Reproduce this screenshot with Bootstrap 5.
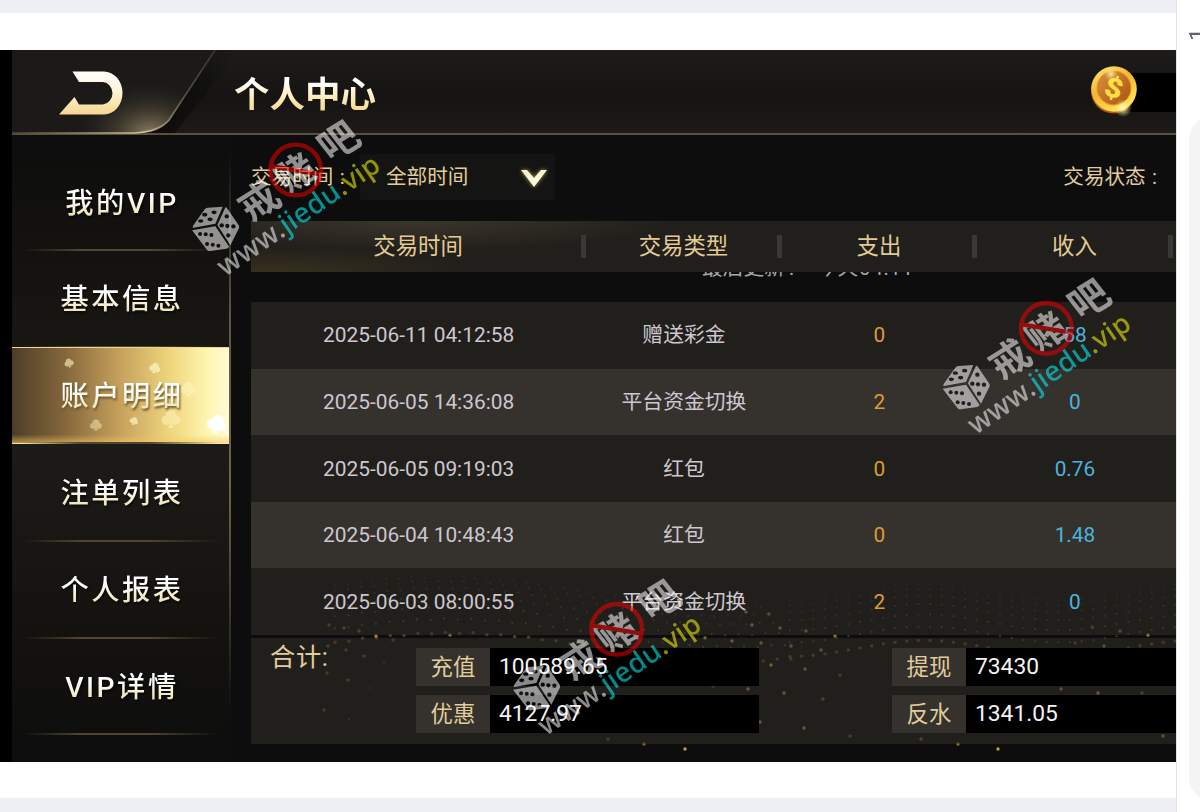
<!DOCTYPE html>
<html lang="zh-CN">
<head>
<meta charset="utf-8">
<title>个人中心</title>
<meta name="viewport" content="width=device-width, initial-scale=1">
<link href="https://cdn.jsdelivr.net/npm/bootstrap@5.3.0/dist/css/bootstrap.min.css" rel="stylesheet">
<style>
body{width:1200px;height:812px;overflow:hidden;background:#fff;font-family:Roboto,"Noto Sans CJK SC",sans-serif;line-height:1}
.viewer{width:1177px;border-right:1px solid #e3e3e5}
.strip{background:#eff0f5}
.shot{height:712px;background:#0d0d0d;border-left:12px solid #000;overflow:hidden;width:1176px}
.topbar{height:85px;background:linear-gradient(#1d1c1b,#151413 55%,#1c1a17);border-bottom:2px solid #5b4f3d}
.topbar .frame{left:0;top:0}
.title{font-weight:700;font-size:35.500px;left:222px;top:26px;line-height:38px;background:linear-gradient(#fff 15%,#fbe9b6 60%,#f3d589);-webkit-background-clip:text;color:transparent;letter-spacing:0}
.coin{right:37px;top:14px}
.balance{right:0;top:23px;width:64px;height:39px;background:#000}
.side{width:219px;height:627px;background:linear-gradient(#0d0d0d,#13120f 18%,#1c1b18 50%,#13120f 80%,#0d0d0d)}
.side::after{content:"";position:absolute;right:0;top:15px;width:2px;height:560px;background:linear-gradient(transparent,#5f5743 30%,#6e6549 60%,transparent)}
.menu-item{height:96.9px;font-size:28.3px;font-weight:500;letter-spacing:2.5px;width:217px;padding-top:4px;padding-left:3px}
.menu-item:first-child{height:115px;padding-top:23px}
.menu-item::after{content:"";position:absolute;left:10px;right:10px;bottom:-1px;height:2px;background:linear-gradient(90deg,transparent,#4f4531 30%,#4f4531 65%,transparent)}
.menu-item>span{line-height:40px;background:linear-gradient(#fff 35%,#f3eccb 65%,#ded69e);-webkit-background-clip:text;color:transparent;filter:drop-shadow(1px 2px 1px #0009)}
.menu-item.active{background:linear-gradient(0deg,#f6c75c99,transparent 9%),linear-gradient(90deg,#4c3d28,#84663b 24%,#c6a15d 50%,#efd67d 73%,#fff5b0 90%,#fffbd5);border-top:1px solid #efd68e;border-bottom:1px solid #ffe9a0}
.menu-item.active>span{filter:drop-shadow(1px 2px 1px #6b5428)}
.main{margin-left:20px;width:925px}
.gold{color:#e0cc9c}
.filters{height:86px;padding-top:19px;font-size:20.6px}
.pick{width:195px;height:46px;background:#141413;border-radius:3px;margin-left:14px;padding:1px 20px 0 26px}
.grid5{display:grid;grid-template-columns:335.2px 195.5px 195.5px 195.5px 1fr;align-items:center;justify-items:center}
.thead5{height:51px;font-size:22.4px;background:radial-gradient(ellipse 260px 30px at 160px 0,#3b362b,transparent),radial-gradient(ellipse 200px 26px at 20px 51px,#37301f,transparent),#211f1b;color:#e3cb95}
.thead5>div{width:100%;height:23px;line-height:22px;text-align:center;border-right:5px solid #393836;padding-left:4px}
.thead5>div:last-child{border:0}
.refresh{height:30px;font-size:20.7px;color:#a9a6a9;overflow:hidden;padding-left:451px;white-space:pre}
.refresh span{display:block;margin-top:-14px}
.refresh em{font-style:normal;margin-left:17px;letter-spacing:.7px}
.rec{height:66.6px;font-size:20.8px;color:#cdc7cf;background:rgba(53,50,43,.5);padding-top:1px}
.rec:nth-child(even){background:#35312d}
.rec span:first-child{font-size:20.900px}
.out{color:#dc9c34}.inc{color:#4db3dc}
.total{height:106px;margin-top:3px;background:rgba(53,50,43,.5)}
.total .lbl{font-size:25.300px;left:19px;top:7px;letter-spacing:.6px}
.pair{height:38px;font-size:22.8px}
.pair>b{font-weight:400;font-size:22.400px;width:74px;height:38px;background:#35312c;color:#e0cc9c}
.pair>i{font-style:normal;flex:1;height:38px;background:#000;color:#f3f3f3;padding-left:9px}
.colA{left:165px;top:10px;width:343px}.colB{left:641px;top:10px;width:300px}
.panel{left:1189px;top:117px;width:60px;height:683px;border-radius:22px;background:#f4f4f4}
.pageno{left:1187px;top:28px;font-size:23px;color:#5c6470;writing-mode:vertical-rl;transform:rotate(180deg)}
.wm{opacity:.54;pointer-events:none}
</style>
</head>
<body class="position-relative">
<div class="viewer d-flex flex-column h-100">
 <div class="strip" style="height:13px"></div>
 <div style="height:37px"></div>
 <div class="shot position-relative">
  <header class="topbar position-relative">
   <svg class="frame position-absolute" width="230" height="85" viewBox="12 50 230 85">
    <defs>
     <radialGradient id="glow" gradientUnits="userSpaceOnUse" cx="150" cy="134" r="75" gradientTransform="translate(0 40) scale(1 .7)"><stop offset="0" stop-color="#8d8162"/><stop offset=".5" stop-color="#4b4434" stop-opacity=".6"/><stop offset="1" stop-color="#222" stop-opacity="0"/></radialGradient>
     <linearGradient id="edge" x1="0" x2="1"><stop offset="0" stop-color="#4b4334"/><stop offset=".65" stop-color="#d8c79d"/><stop offset=".85" stop-color="#5a5240"/><stop offset="1" stop-color="#3a352b"/></linearGradient>
     <linearGradient id="dk" x1="0" x2="1"><stop offset="0" stop-color="#000" stop-opacity=".6"/><stop offset="1" stop-color="#000" stop-opacity="0"/></linearGradient>
     <linearGradient id="ivory" x1="0" y1="0" x2="0" y2="1"><stop offset="0" stop-color="#fff"/><stop offset=".5" stop-color="#fff3d3"/><stop offset="1" stop-color="#f4d68e"/></linearGradient>
    </defs>
    <path d="M213 50 169 120Q163 130 150 133H175L240 50Z" fill="url(#dk)"/>
    <path d="M12 50H213L170 120Q160 133 135 133H12Z" fill="#1b1a18"/>
    <path d="M12 50H213L170 120Q160 133 135 133H12Z" fill="url(#glow)"/>
    <path d="M12 133H135Q158 132 169 120L215 50" fill="none" stroke="url(#edge)" stroke-width="1.6"/>
    <path d="M72.500 71.500H104A18.500 21.500 0 0 1 104 114.500H59L74.500 97 79 104.500H103A10.500 11.300 0 0 0 103 82H79Z" fill="url(#ivory)"/>
   </svg>
   <div class="title position-absolute">个人中心</div>
   <div class="balance position-absolute"></div>
   <svg class="coin position-absolute" width="50" height="54" viewBox="0 0 50 54">
    <defs><linearGradient id="cg" x1="0" y1="0" x2=".6" y2="1"><stop offset="0" stop-color="#ffe97a"/><stop offset=".5" stop-color="#f5b52e"/><stop offset="1" stop-color="#ffe45a"/></linearGradient>
    <linearGradient id="ci" x1="0" y1="0" x2="1" y2="1"><stop offset="0" stop-color="#d9913c"/><stop offset="1" stop-color="#a9540f"/></linearGradient>
    <radialGradient id="sp"><stop offset="0" stop-color="#ffffd8"/><stop offset="1" stop-color="#ffe85a" stop-opacity="0"/></radialGradient></defs>
    <ellipse cx="24.500" cy="27" rx="22.500" ry="22.500" fill="#b4560f"/>
    <circle cx="25" cy="25" r="22.800" fill="url(#cg)"/>
    <circle cx="25" cy="24" r="17" fill="url(#ci)" stroke="#e39a25"/>
    <text x="24.500" y="33.500" font-family="Roboto" font-weight="900" font-size="27" fill="#ffdf45" text-anchor="middle" transform="rotate(16 25 25)" textLength="18" lengthAdjust="spacingAndGlyphs">$</text>
    <circle cx="22" cy="10" r="7" fill="url(#sp)" opacity=".8"/><circle cx="34" cy="44" r="9" fill="url(#sp)"/>
   </svg>
  </header>
  <svg id="dust" class="position-absolute" style="left:-12px;top:0" width="1176" height="712" viewBox="0 50 1176 712"></svg>
  <div class="d-flex position-relative">
   <nav class="side position-relative flex-shrink-0">
    <div class="menu-item position-relative d-flex align-items-center justify-content-center"><span>我的VIP</span></div>
    <div class="menu-item position-relative d-flex align-items-center justify-content-center"><span>基本信息</span></div>
    <div class="menu-item active position-relative d-flex align-items-center justify-content-center">
     <svg class="position-absolute start-0 top-0" width="217" height="95" viewBox="0 0 217 95"><defs><path id="sd" d="M0-8C-4-8-5-5-5-3-9-3-10 3-6 5-4 6-2 5-1 4L-3 8H3L1 4C2 5 4 6 6 5 10 3 9-3 5-3 5-5 4-8 0-8Z"/></defs>
      <g fill="#fff6c4"><use href="#sd" transform="translate(57 15) rotate(-15) scale(.55)" opacity=".6"/><use href="#sd" transform="translate(143 20) rotate(15) scale(.65)" opacity=".7"/><use href="#sd" transform="translate(176 41) scale(.9)" opacity=".5"/><use href="#sd" transform="translate(84 77) scale(.7)" opacity=".45"/><use href="#sd" transform="translate(122 73) rotate(20) scale(.5)" opacity=".7"/><use href="#sd" transform="translate(159 71) scale(1.1)" opacity=".5"/><use href="#sd" transform="translate(205 76) rotate(15) scale(1.150)" fill="#fff"/></g></svg>
     <span class="position-relative">账户明细</span></div>
    <div class="menu-item position-relative d-flex align-items-center justify-content-center"><span>注单列表</span></div>
    <div class="menu-item position-relative d-flex align-items-center justify-content-center"><span>个人报表</span></div>
    <div class="menu-item position-relative d-flex align-items-center justify-content-center"><span>VIP详情</span></div>
   </nav>
   <main class="main">
    <div class="filters d-flex align-items-start gold position-relative">
     <div class="d-flex align-items-center" style="height:47px;width:95px;white-space:nowrap">交易时间&thinsp;&hairsp;:</div>
     <div class="pick d-flex align-items-center justify-content-between"><span>全部时间</span>
      <svg width="28" height="22" viewBox="0 0 28 22" style="margin-right:-13px;filter:drop-shadow(0 0 2px #a89c4f)"><path d="M1 3H7L14 11 21 3H27L14 20Z" fill="#fbf8d8"/></svg></div>
     <div class="d-flex align-items-center ms-auto" style="height:47px;margin-right:19px">交易状态&thinsp;&hairsp;:</div>
    </div>
    <div class="thead5 grid5"><div>交易时间</div><div>交易类型</div><div>支出</div><div>收入</div><div></div></div>
    <div class="refresh"><span>最后更新&thinsp;: <em>今天04:11</em></span></div>
    <div>
     <div class="rec grid5"><span>2025-06-11 04:12:58</span><span>赠送彩金</span><span class="out">0</span><span class="inc">58</span></div>
     <div class="rec grid5"><span>2025-06-05 14:36:08</span><span>平台资金切换</span><span class="out">2</span><span class="inc">0</span></div>
     <div class="rec grid5"><span>2025-06-05 09:19:03</span><span>红包</span><span class="out">0</span><span class="inc">0.76</span></div>
     <div class="rec grid5"><span>2025-06-04 10:48:43</span><span>红包</span><span class="out">0</span><span class="inc">1.48</span></div>
     <div class="rec grid5"><span>2025-06-03 08:00:55</span><span>平台资金切换</span><span class="out">2</span><span class="inc">0</span></div>
    </div>
    <div class="total position-relative">
     <div class="lbl gold position-absolute">合计:</div>
     <div class="colA position-absolute d-flex flex-column" style="gap:9.500px"><div class="pair d-flex"><b class="d-flex align-items-center justify-content-center">充值</b><i class="d-flex align-items-center">100589.65</i></div><div class="pair d-flex"><b class="d-flex align-items-center justify-content-center">优惠</b><i class="d-flex align-items-center">4127.97</i></div></div>
     <div class="colB position-absolute d-flex flex-column" style="gap:9.500px"><div class="pair d-flex"><b class="d-flex align-items-center justify-content-center">提现</b><i class="d-flex align-items-center">73430</i></div><div class="pair d-flex"><b class="d-flex align-items-center justify-content-center">反水</b><i class="d-flex align-items-center">1341.05</i></div></div>
    </div>
   </main>
  </div>
 </div>
 <div class="flex-grow-1"></div>
 <div class="strip" style="height:14px"></div>
</div>
<div class="pageno position-absolute">1</div>
<div class="panel position-absolute"></div>

<svg class="wm position-absolute start-0 top-0" width="1200" height="812" viewBox="0 0 1200 812">
 <defs>
  <g id="mark">
   <path fill="#fff" d="M76 293Q79 289 85 288L130 285 108 336 42 348Q38 349 41 342ZM138 287Q142 287 144 291L178 341Q181 346 178 351L153 401 114 340ZM38 356 108 344 149 405Q147 410 141 411L92 418Q86 419 83 415Z"/>
   <g fill="#111"><ellipse cx="76" cy="309" rx="8" ry="5.500"/><ellipse cx="104" cy="302" rx="8" ry="5.500"/><ellipse cx="64" cy="328" rx="8" ry="5.500"/><ellipse cx="92" cy="323" rx="8" ry="5.500"/>
   <circle cx="62" cy="367" r="6"/><circle cx="79" cy="368" r="6"/><circle cx="96" cy="370" r="6"/><circle cx="83" cy="397" r="6"/><circle cx="100" cy="399" r="6"/><circle cx="117" cy="402" r="6"/>
   <circle cx="142" cy="314" r="6.500"/><circle cx="127" cy="341" r="6.500"/><circle cx="144" cy="343" r="6.500"/><circle cx="162" cy="344" r="6.500"/><circle cx="147" cy="371" r="6.500"/></g>
   <g fill="#fff" font-family="Noto Sans CJK SC" font-weight="700" font-size="116" text-anchor="middle">
    <text transform="translate(237 266) rotate(-32) skewX(6)" y="44">戒</text>
    <text transform="translate(347 183) rotate(-32) skewX(6)" y="44">赌</text>
    <text transform="translate(476 86) rotate(-32) skewX(6)" y="44">吧</text></g>
   <text transform="translate(137 496) rotate(-34.400)" font-family="Noto Sans" font-weight="500" font-size="84" textLength="572" fill="#fff">www.<tspan fill="#0ff">jiedu</tspan><tspan fill="#ff0">.vip</tspan></text>
   <g fill="none" stroke="#f00000" stroke-width="13"><circle cx="349" cy="175" r="76"/><path d="M275 163 423 188"/></g>
  </g>
 </defs>
 <use href="#mark" transform="translate(179.400 111.700) scale(.33333)"/>
 <use href="#mark" transform="translate(930 270) scale(.33333)"/>
 <use href="#mark" transform="translate(500.400 571) scale(.33333)"/>
</svg>
<script src="https://cdn.jsdelivr.net/npm/bootstrap@5.3.0/dist/js/bootstrap.bundle.min.js"></script>
<script>
// gold particles of the backdrop: x, y, opacity
const pts=[[329,625,.4],[344,628,.5],[359,631,.5],[376,636,.8],[393,640,.4],[450,635,.7],[328,646,.4],[346,650,.4],[364,656,.4],[384,662,.3],[327,673,.4],[348,680,.4],[370,688,.2],[324,710,.4],[349,719,.3],
[746,612,.7],[752,625,.8],[769,614,.6],[780,628,.7],[705,638,.7],[732,641,.8],[761,643,.8],[771,665,.9],[748,689,.8],[713,686,.4],[760,722,.8],[608,739,.4],[644,744,.6],[685,749,1],
[791,646,.7],[821,650,.7],[805,669,.7],[840,675,.4],[784,693,.8],[823,699,.5],[804,728,.8],[850,736,.4],[921,739,.5],[958,744,.7],[998,749,1],[1061,689,.7],[1098,693,.8],[1142,693,.5],[1163,736,.7],[1148,635,.8],[1104,646,.7],[1120,631,.6],[1075,643,.4],[1092,627,.4],[806,631,.7],[835,636,.7]];
for(let k=0;k<7;k++)for(let i=0;i<34;i++){
 const t=i/33;
 pts.push([335+t*(420+k*6),590-14*Math.sin(t*5+.3)+k*(4+k*.9)+i%2,.13+k*.04]);
 pts.push([790+t*385,592+8*Math.cos(t*9)+k*(4+k*.9),.1+k*.045]);
}
document.getElementById('dust').innerHTML=pts.map(p=>`<circle cx="${p[0]}" cy="${p[1]}" r="${p[2]>.35?1.7:1.1}" fill="#c99a45" opacity="${p[2]}"/>`).join('');
</script>
</body>
</html>
